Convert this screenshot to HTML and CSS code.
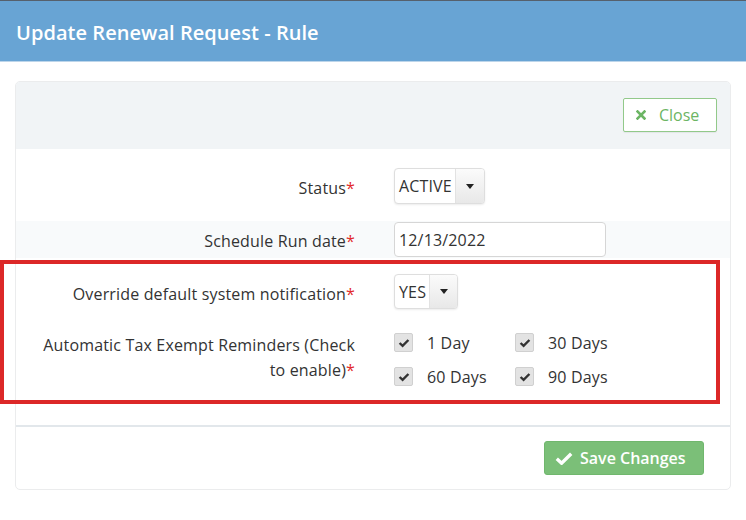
FILE: index.html
```html
<!DOCTYPE html>
<html>
<head>
<meta charset="utf-8">
<link rel="stylesheet" href="styles.css">
</head>
<body>
<div class="topline"></div>
<header class="modal-header">
  <h1 class="modal-title">Update Renewal Request - Rule</h1>
</header>
<div class="modal-body">
  <div class="panel">
    <div class="panel-heading">
      <button class="btn btn-close" type="button">
        <svg class="ico-x" width="10" height="10" viewBox="0 0 10 10"><path d="M1.5 1.5 L8.5 8.5 M8.5 1.5 L1.5 8.5" stroke="#6cb564" stroke-width="2.6" stroke-linecap="square"/></svg>
        <span>Close</span>
      </button>
    </div>
    <div class="panel-body">
      <div class="form-row">
        <div class="form-label">Status<span class="req">*</span></div>
        <div class="form-control">
          <div class="select">
            <span class="select-value">ACTIVE</span>
            <span class="select-btn"><span class="caret"></span></span>
          </div>
        </div>
      </div>
      <div class="form-row striped">
        <div class="form-label">Schedule Run date<span class="req">*</span></div>
        <div class="form-control">
          <div class="input">12/13/2022</div>
        </div>
      </div>
      <div class="form-row">
        <div class="form-label">Override default system notification<span class="req">*</span></div>
        <div class="form-control">
          <div class="select select-sm">
            <span class="select-value">YES</span>
            <span class="select-btn"><span class="caret"></span></span>
          </div>
        </div>
      </div>
      <div class="form-row">
        <div class="form-label">Automatic Tax Exempt Reminders (Check to enable)<span class="req">*</span></div>
        <div class="form-control">
          <div class="checks">
            <label class="check"><span class="box"><svg width="12" height="10" viewBox="0 0 12 10"><path d="M1.6 5 L4.6 7.9 L10.4 2" fill="none" stroke="#333" stroke-width="2.4"/></svg></span>1 Day</label>
            <label class="check"><span class="box"><svg width="12" height="10" viewBox="0 0 12 10"><path d="M1.6 5 L4.6 7.9 L10.4 2" fill="none" stroke="#333" stroke-width="2.4"/></svg></span>30 Days</label>
            <label class="check"><span class="box"><svg width="12" height="10" viewBox="0 0 12 10"><path d="M1.6 5 L4.6 7.9 L10.4 2" fill="none" stroke="#333" stroke-width="2.4"/></svg></span>60 Days</label>
            <label class="check"><span class="box"><svg width="12" height="10" viewBox="0 0 12 10"><path d="M1.6 5 L4.6 7.9 L10.4 2" fill="none" stroke="#333" stroke-width="2.4"/></svg></span>90 Days</label>
          </div>
        </div>
      </div>
    </div>
    <div class="panel-footer">
      <button class="btn btn-save" type="button">
        <svg class="ico-check" width="18" height="13" viewBox="0 0 18 13"><path d="M1.8 6.8 L6.6 11.2 L16.2 1.8" fill="none" stroke="#fff" stroke-width="3.4" stroke-linejoin="miter"/></svg>
        <span>Save Changes</span>
      </button>
    </div>
  </div>
</div>
<div class="highlight"></div>
</body>
</html>
```
FILE: styles.css
```css
* { box-sizing: border-box; }
html, body { margin: 0; padding: 0; background: #fff; }
body {
  font-family: "Open Sans", "Noto Sans", sans-serif;
  font-size: 16px;
  color: #333;
  position: relative;
  width: 746px;
  height: 520px;
  overflow: hidden;
}
.topline { height: 1px; background: #56606c; }
.modal-header {
  height: 61px;
  background: #68a4d4;
  border-bottom: 1px solid #bcd5ea;
  display: flex;
  align-items: center;
  padding: 0 16px;
}
.modal-title {
  margin: 0;
  font-size: 20px;
  font-weight: 600;
  color: #fff;
  line-height: 1;
  position: relative;
  top: 2px;
  letter-spacing: 0.05px;
}
.modal-body { padding: 19px 15px 0 15px; }
.panel {
  width: 716px;
  border: 1px solid #ebeced;
  border-radius: 5px;
  overflow: hidden;
}
.panel-heading {
  background: #f1f4f6;
  height: 67px;
  display: flex;
  justify-content: flex-end;
  align-items: flex-start;
  padding: 16px 13px 0 0;
}
.btn {
  font-family: inherit;
  font-size: 16px;
  display: inline-flex;
  align-items: center;
  height: 34px;
  cursor: pointer;
}
.btn-close {
  width: 94px;
  background: #fff;
  border: 1px solid #92c98a;
  border-radius: 2px;
  color: #6cb564;
  padding: 0 0 0 12px;
  box-shadow: 0 1px 1px rgba(0,0,0,0.06);
}
.ico-x { margin-right: 13px; }
.panel-body { padding: 19px 0 32px 0; letter-spacing: 0.16px; }
.form-row {
  display: grid;
  grid-template-columns: 327px 1fr;
  column-gap: 39px;
  padding-left: 12px;
}
.form-row + .form-row { margin-top: 16px; }
.form-row.striped { background: #f8fafb; padding-top: 1px; padding-bottom: 1px; margin-top: 17px; }
.form-label {
  text-align: right;
  line-height: 25px;
  padding-top: 8px;
  padding-left: 8px;
}
.form-row.striped .form-label { padding-top: 7px; }
.req { color: #e22a2a; }
.select {
  display: inline-flex;
  height: 36px;
  border: 1px solid #dedede;
  border-radius: 4px;
  box-shadow: 0 1px 2px rgba(0,0,0,0.08);
  overflow: hidden;
  background: #fff;
}
.select-sm { height: 35px; }
.select-value {
  display: flex;
  align-items: center;
  padding: 0 3px 0 4px;
  color: #333;
}
.select-btn {
  width: 29px;
  border-left: 1px solid #e2e2e2;
  background: linear-gradient(#fbfbfb, #e8e8e8);
  display: flex;
  align-items: center;
  justify-content: center;
}
.select-sm .select-btn { width: 28px; }
.caret {
  width: 0; height: 0;
  border-top: 5px solid #222;
  border-left: 4px solid transparent;
  border-right: 4px solid transparent;
}
.input {
  width: 212px;
  height: 35px;
  border: 1px solid #d6d6d6;
  border-radius: 4px;
  background: #fff;
  padding: 0 4px;
  display: flex;
  align-items: center;
}
.checks {
  display: grid;
  grid-template-columns: 121px 1fr;
}
.check {
  display: flex;
  align-items: center;
  height: 34px;
  padding-top: 1px;
}
.box {
  width: 19px;
  height: 19px;
  border: 1px solid #d0d0d0;
  border-radius: 2px;
  background: #e3e3e3;
  display: flex;
  align-items: center;
  justify-content: center;
  margin-right: 14px;
}
.panel-footer {
  border-top: 2px solid #e2e7eb;
  height: 64px;
  display: flex;
  justify-content: flex-end;
  padding: 14px 26px 0 0;
}
.btn-save {
  width: 160px;
  background: #7bbf78;
  border: 1px solid #70b76d;
  border-radius: 3px;
  color: #fff;
  font-weight: 600;
  padding: 0 0 0 10px;
}
.ico-check { margin-right: 7px; }
.highlight {
  position: absolute;
  left: 0;
  top: 260px;
  width: 720px;
  height: 144px;
  border: 4px solid #dc2828;
  pointer-events: none;
}
```
